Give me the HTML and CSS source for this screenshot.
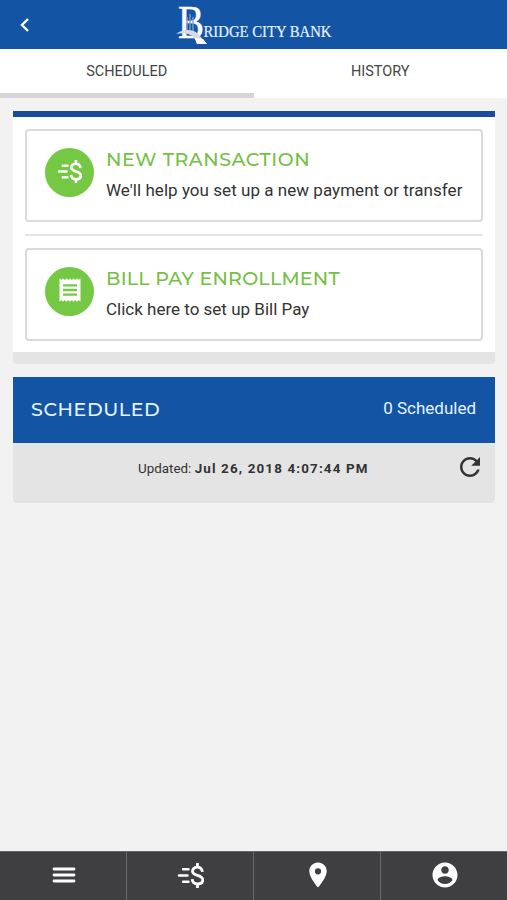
FILE: index.html
```html
<!DOCTYPE html>
<html lang="en">
<head>
<meta charset="utf-8">
<title>Bridge City Bank</title>
<link rel="stylesheet" href="styles.css">
</head>
<body>
<svg width="0" height="0" class="defs">
	<symbol id="send-money" viewBox="0 0 26 26">
		<path d="M6 7h5M2 13h8M6 19h5" fill="none" stroke="currentColor" stroke-width="2.600" stroke-linecap="round"/>
		<path d="M24.500 9.500C24 6.500 22 5 19.700 5c-2.800 0-4.800 1.600-4.800 3.900 0 5.300 9.900 2.700 9.900 8.300 0 2.400-2 3.900-5 3.900-2.900 0-4.900-1.700-5.200-4.600M19.700 1v4M19.700 21v4" fill="none" stroke="currentColor" stroke-width="2.700"/>
	</symbol>
</svg>
<header>
	<svg class="back" width="10" height="16" viewBox="0 0 10 16"><path d="M8 2L2 8l6 6" fill="none" stroke="#fff" stroke-width="2.400"/></svg>
	<svg class="logo" width="160" height="49" viewBox="0 0 160 49" font-family="Liberation Serif, serif">
		<text x="2" y="38" font-size="46" textLength="26" lengthAdjust="spacingAndGlyphs" fill="#fff" stroke="#fff" stroke-width=".5">B</text>
		<path d="M11 31V17M14 31V14M17 31V17" stroke="#7f9cce" stroke-width="1.400"/>
		<path d="M0 34c6-5 17-5 21-1 4 3 6 8 10 11H21c-2-6-5-9-9-10-4-1-8-1-12 0z" fill="#d8dbe4"/>
		<path d="M19 38c3 0 6 1 8 1l4 5H21z" fill="#fff"/>
		<text x="27.500" y="36.500" font-size="16" textLength="128" lengthAdjust="spacingAndGlyphs" fill="#e5f1ff" stroke="#e5f1ff" stroke-width=".2">RIDGE CITY BANK</text>
	</svg>
</header>
<div class="tabs">
	<div class="tab active">SCHEDULED</div>
	<div class="tab">HISTORY</div>
</div>
<main>
	<section class="actions">
		<div class="action">
			<div class="circle"><svg width="25" height="25"><use href="#send-money"/></svg></div>
			<div>
				<h2 class="new-title">NEW TRANSACTION</h2>
				<p class="new-text">We'll help you set up a new payment or transfer</p>
			</div>
		</div>
		<div class="divider"></div>
		<div class="action">
			<div class="circle">
				<svg width="28" height="28" viewBox="0 0 24 24"><path fill="#fff" d="M18 17H6v-2h12v2zm0-4H6v-2h12v2zm0-4H6V7h12v2zM3 22l1.500-1.500L6 22l1.500-1.500L9 22l1.500-1.500L12 22l1.500-1.500L15 22l1.500-1.500L18 22l1.500-1.500L21 22V2l-1.500 1.500L18 2l-1.500 1.500L15 2l-1.500 1.500L12 2l-1.500 1.500L9 2 7.500 3.500 6 2 4.500 3.500 3 2v20z"/></svg>
			</div>
			<div>
				<h2 class="bill-title">BILL PAY ENROLLMENT</h2>
				<p>Click here to set up Bill Pay</p>
			</div>
		</div>
	</section>
	<section class="scheduled">
		<div class="scheduled-head">
			<h2>SCHEDULED</h2>
			<span>0 Scheduled</span>
		</div>
		<div class="updated">
			<div class="updated-text">Updated: <b>Jul 26, 2018 4:07:44 PM</b></div>
			<svg width="30" height="30" viewBox="0 0 24 24"><path fill="#333" d="M17.650 6.350C16.200 4.900 14.210 4 12 4c-4.420 0-7.990 3.580-7.990 8s3.570 8 7.990 8c3.730 0 6.840-2.550 7.730-6h-2.080c-.82 2.330-3.040 4-5.650 4-3.310 0-6-2.690-6-6s2.690-6 6-6c1.660 0 3.140.69 4.220 1.780L13 11h7V4l-2.350 2.350z"/></svg>
		</div>
	</section>
</main>
<nav>
	<div><svg width="26" height="20" viewBox="0 0 26 20"><path d="M3 4h20M3 10h20M3 16h20" stroke="#fff" stroke-width="2.800" stroke-linecap="round"/></svg></div>
	<div><svg width="27" height="27"><use href="#send-money"/></svg></div>
	<div><svg width="30" height="30" viewBox="0 0 24 24"><path fill="#fff" d="M12 2C8.130 2 5 5.130 5 9c0 5.250 7 13 7 13s7-7.750 7-13c0-3.870-3.130-7-7-7zm0 9.500a2.500 2.500 0 0 1 0-5 2.500 2.500 0 0 1 0 5z"/></svg></div>
	<div><svg width="30" height="30" viewBox="0 0 24 24"><path fill="#fff" d="M12 2C6.480 2 2 6.480 2 12s4.480 10 10 10 10-4.480 10-10S17.520 2 12 2zm0 3c1.660 0 3 1.340 3 3s-1.340 3-3 3-3-1.340-3-3 1.340-3 3-3zm0 14.200c-2.500 0-4.710-1.280-6-3.220.03-1.990 4-3.080 6-3.080 1.990 0 5.970 1.090 6 3.080-1.290 1.940-3.500 3.220-6 3.220z"/></svg></div>
</nav>
</body>
</html>
```
FILE: styles.css
```css
* {
	box-sizing: border-box;
}
body {
	margin: 0;
	height: 100vh;
	display: flex;
	flex-direction: column;
	background: #f2f2f2;
	color: #333;
	font-family: Roboto, sans-serif;
	overflow: hidden;
}
h2, p {
	margin: 0;
}
svg {
	display: block;
}
.defs {
	display: none;
}
header {
	height: 49px;
	background: #1454a4;
	display: flex;
	align-items: center;
	padding-left: 20px;
}
.logo {
	margin-left: 146px;
	overflow: visible;
}
.tabs {
	display: flex;
	height: 49px;
	background: #fff;
}
.tab {
	flex: 1;
	text-align: center;
	font-size: 14.5px;
	line-height: 45px;
	color: #444;
}
.tab.active {
	border-bottom: 5px solid #d6d6d6;
}
main {
	flex: 1;
	padding: 13px 12px 0 13px;
}
.actions {
	background: #fff;
	border-top: 6px solid #184d9b;
	border-bottom: 12px solid #e4e4e4;
	border-radius: 0 0 4px 4px;
	padding: 12px;
	height: 253px;
}
.action {
	height: 93px;
	border: 2px solid #dadada;
	border-radius: 4px;
	display: flex;
	padding: 17px 0 0 18px;
}
.circle {
	width: 49px;
	height: 49px;
	border-radius: 50%;
	background: #74c844;
	color: #fff;
	display: flex;
	align-items: center;
	justify-content: center;
	padding-bottom: 3px;
	margin-right: 12px;
}
.action h2 {
	font: 500 19px/24px Montserrat, Lato, sans-serif;
	color: #74c044;
	white-space: nowrap;
}
.action .new-title {
	letter-spacing: .55px;
}
.action .bill-title {
	letter-spacing: .25px;
}
.action p {
	font-size: 17px;
	line-height: 20px;
	margin-top: 8px;
	white-space: nowrap;
}
.action .new-text {
	letter-spacing: .04px;
}
.divider {
	height: 2px;
	background: #e4e4e4;
	margin: 12px 0;
}
.scheduled {
	margin-top: 13px;
}
.scheduled-head {
	height: 66px;
	background: #1454a4;
	color: #e5f4ff;
	display: flex;
	align-items: center;
	justify-content: space-between;
	padding: 0 19px 0 18px;
}
.scheduled-head h2 {
	font: 500 19px/24px Montserrat, Lato, sans-serif;
	letter-spacing: .6px;
}
.scheduled-head span {
	font-size: 17px;
	margin-top: -4px;
}
.updated {
	height: 60px;
	background: #e4e4e4;
	border-radius: 0 0 4px 4px;
	display: flex;
	padding: 9px 10px 0 125px;
	justify-content: space-between;
}
.updated-text {
	font-size: 13.4px;
	line-height: 34px;
}
.updated b {
	letter-spacing: 1.15px;
}
nav {
	display: flex;
	height: 49px;
	background: #3f3f41;
	border-top: 1px solid #666;
	color: #fff;
}
nav div {
	flex: 1;
	display: flex;
	align-items: center;
	justify-content: center;
	padding: 0 0 2px 1px;
	border-right: 1px solid #69696b;
}
nav div:last-child {
	border-right: 0;
}
```
